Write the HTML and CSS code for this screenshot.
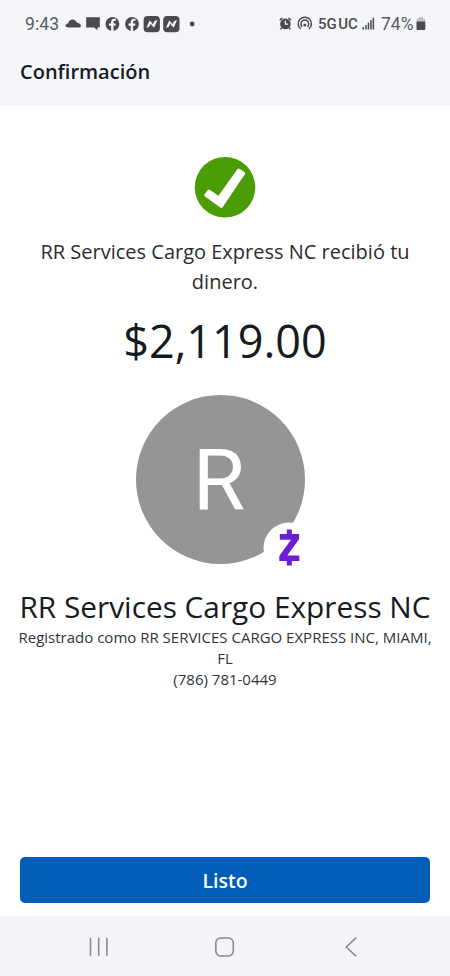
FILE: index.html
```html
<!DOCTYPE html>
<html lang="es">
<head>
<meta charset="utf-8">
<meta name="viewport" content="width=device-width, initial-scale=1">
<title>Confirmación</title>
<link rel="stylesheet" href="styles.css">
</head>
<body>
<div class="screen">
  <header class="top">
    <div class="status">
      <span class="time">9:43</span>
      <svg class="notifications" width="132" height="20" viewBox="64 14 132 20">
        <path d="M68.500 27.600c-2 0-3-.9-3-2 0-1.300 1-1.900 2.500-2.100 1-2.500 2.400-4 4.500-4 2.200 0 3.400 1.300 4.200 3 2.500.300 4.200 1.700 4.200 3.200 0 1.200-1 1.900-2.500 1.900z"/>
        <path d="M86.200 17.200h13.600v10.200h-2.400v2.800l-3.200-2.800h-8z"/>
        <g id="social"><circle cx="112.400" cy="24" r="6.900"/><path class="cut" d="M111.100 31v-5.300h-2.200v-2.300h2.200v-1.300c0-2.300 1.300-3.400 3.300-3.400h1.500v2h-1.200c-.9 0-1.200.5-1.200 1.200v1.500h2.400l-.4 2.300h-2V31z"/></g>
        <use href="#social" x="19.600"/>
        <g id="news"><rect x="143.600" y="16" width="16.300" height="16.200" rx="4"/><path class="cut" d="M146.400 27.700l3.200-7.300 2.400 2.300.6 1.900 2-3.700 2.800-.8-3.200 7.300-2.500-1.900-.7-2.200-2 3.800z"/></g>
        <use href="#news" x="19.600"/>
        <circle cx="192.200" cy="24" r="2.400"/>
      </svg>
      <svg class="alerts" width="36" height="20" viewBox="278 14 36 20">
        <circle cx="285.400" cy="23.900" r="5.300"/>
        <path class="line" d="M279.700 20.200l2.900-2.200M291.100 20.200l-2.900-2.200M281.900 27.500l-1.500 1.900M289 27.500l1.500 1.900"/>
        <path class="cutline" d="M285.400 20.800v3.300h2.700"/>
        <path class="line" d="M300.800 29a6.600 6.600 0 1 1 8 0M302.200 26.900a3.900 3.900 0 1 1 5.200 0"/>
        <circle cx="304.800" cy="24.900" r="1.500"/>
      </svg>
      <span class="network">5G<span class="uc">UC</span></span>
      <svg class="signal" width="13" height="14" viewBox="0 0 13 14"><path d="M.5 10h1.500v2.500H.5zM3.200 8h1.500v4.500H3.200zM5.700 5.500h1.500v7H5.700zM8.200 3h1.500v9.500H8.200zM10.600.7h1.500v11.800h-1.500z"/></svg>
      <span class="percent">74%</span>
      <svg class="battery" width="10" height="14" viewBox="0 0 10 14"><path class="empty" d="M3 0h4v1.500h2V5H.7V1.500H3z"/><path d="M.5 4.500h8.800v7.200q0 1.300-1.300 1.300H1.800Q.5 13 .5 11.700z"/></svg>
    </div>
    <h1>Confirmación</h1>
  </header>
  <main>
    <svg class="check" width="62" height="62" viewBox="0 0 62 62"><circle cx="31" cy="31.300" r="30.300"/><path d="M10.700 38L13.600 34.300q1-1.200 2.300-.3L24.500 39.800 43.300 13.300q1-1.300 2.300-.4L50.400 16q1.300.9.400 2.300L28.800 51q-1 1.500-2.500.5L11 40.600q-1.400-1-.3-2.600z"/></svg>
    <p class="message">RR Services Cargo Express NC recibió tu<br>dinero.</p>
    <p class="amount">$2,119.00</p>
    <div class="avatar">
      <span class="initial">R</span>
      <svg class="badge" width="52" height="52" viewBox="0 0 52 52"><circle cx="26" cy="26" r="25.500"/><path d="M23.800 7.500h5V12h7.300v5.200L24.300 33.400H36.300v5.500h-7.500v4.600h-5v-4.600h-7.500v-4.800L28 17.700H16.800V12h7z"/></svg>
    </div>
    <h2>RR Services Cargo Express NC</h2>
    <p class="details">Registrado como RR SERVICES CARGO EXPRESS INC, MIAMI,<br>FL<br>(786) 781-0449</p>
    <button class="done">Listo</button>
  </main>
  <nav>
    <svg width="20" height="20" viewBox="0 0 20 20"><path d="M2.500.8v18M10.700.8v18M18.900.8v18"/></svg>
    <svg width="20" height="20" viewBox="0 0 20 20"><rect x=".8" y="1" width="17.500" height="18" rx="5"/></svg>
    <svg width="20" height="20" viewBox="0 0 20 20"><path d="M15.200.7L5.300 10l9.900 9.300"/></svg>
  </nav>
</div>
</body>
</html>
```
FILE: styles.css
```css
* { box-sizing: border-box; }
body { margin: 0; background: #fff; color: #151b22; font-family: "Open Sans", sans-serif; }
h1, h2, p { margin: 0; font-weight: 400; }
svg { display: block; flex: none; }
.screen { width: 450px; height: 976px; display: flex; flex-direction: column; overflow: hidden; }
.top { height: 106px; flex: none; background: #f4f6f9; }
.status { height: 48px; padding-left: 25px; display: flex; align-items: center; font-family: Roboto, sans-serif; color: #4b4b4d; fill: #4b4b4d; white-space: nowrap; }
.time { width: 39px; font-size: 17.500px; letter-spacing: .1px; color: #5b5b5e; }
.cut { fill: #f4f6f9; }
.line { fill: none; stroke: #4b4b4d; stroke-width: 1.500; }
.cutline { fill: none; stroke: #f4f6f9; stroke-width: 1.300; }
.alerts { margin-left: 82px; }
.network { width: 44px; margin-left: 4px; font-size: 15px; font-weight: 500; }
.uc { margin-left: 1.500px; }
.signal { margin-right: 6px; }
.percent { width: 35px; font-size: 17.500px; color: #5b5b5e; }
.empty { fill: #c3c3c5; }
h1 { padding-left: 20px; font-size: 20px; line-height: 26px; margin-top: 11px; font-weight: 600; }
main { flex: 1; min-height: 0; padding: 50px 20px 13px; display: flex; flex-direction: column; align-items: center; text-align: center; white-space: nowrap; }
.check circle { fill: #4b9d05; }
.check path { fill: #fff; }
.message { margin-top: 19px; font-size: 20px; line-height: 30px; color: #292d32; }
.amount { margin-top: 14px; font-size: 45px; line-height: 60px; }
.avatar { position: relative; width: 169px; height: 169px; margin: 24px 9px 0 0; border-radius: 50%; background: #959595; display: flex; align-items: center; justify-content: center; flex: none; }
.initial { margin: 3px 3px 0 0; color: #fff; font-family: Roboto, sans-serif; font-size: 85px; line-height: 100px; }
.badge { position: absolute; left: 127px; top: 127px; }
.badge circle { fill: #fff; }
.badge path { fill: #6d1ed4; }
h2 { margin-top: 23px; font-size: 29.800px; line-height: 40px; }
.details { font-size: 15px; line-height: 21px; color: #303439; }
.done { width: 410px; height: 46px; margin-top: auto; padding: 1px 0 0; border: 0; border-radius: 5px; background: #005eb8; color: #fff; font: 600 19.500px/26px "Open Sans", sans-serif; }
nav { height: 60px; flex: none; padding: 1px 89px 0 88px; display: flex; align-items: center; justify-content: space-between; background: #f4f5f8; }
nav svg { fill: none; stroke: #8b8b8f; stroke-width: 1.600; }
```
